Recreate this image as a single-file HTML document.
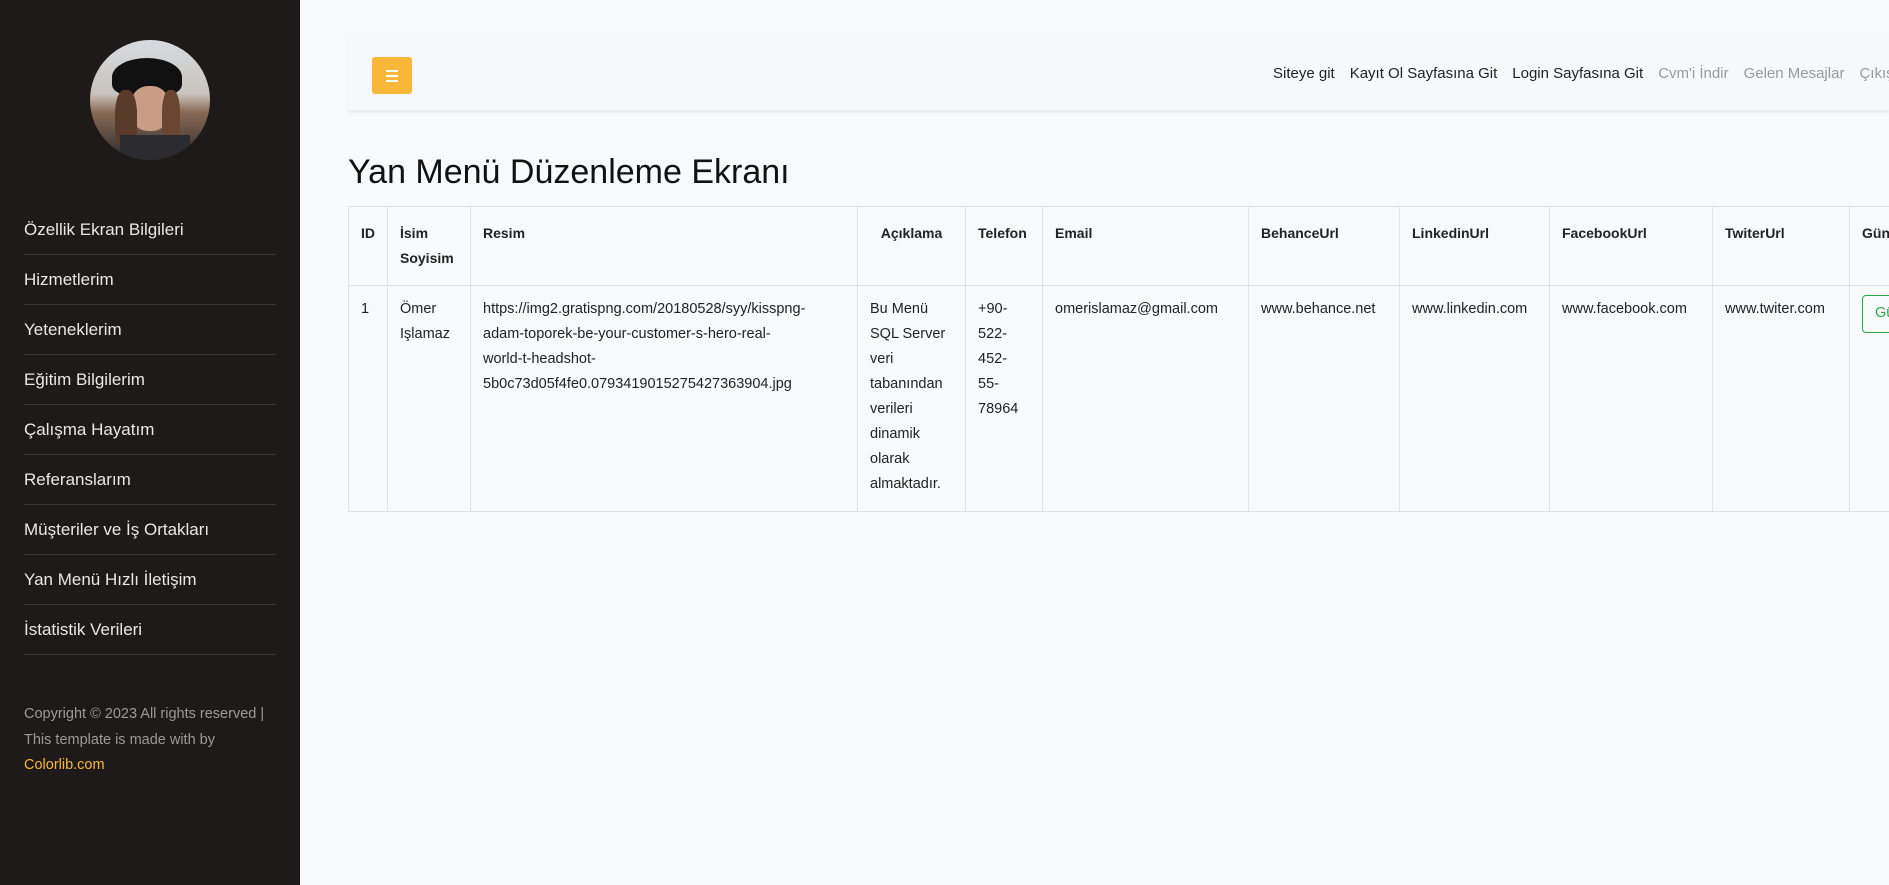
<!DOCTYPE html>
<html><head><meta charset="utf-8"><style>
*{margin:0;padding:0;box-sizing:border-box}
body{width:1889px;height:885px;overflow:hidden;background:#f8f9fa;font-family:"Liberation Sans",sans-serif;position:relative}
#sb{position:absolute;left:0;top:0;width:300px;height:885px;background:#1e1a19}
.av{position:absolute;left:90px;top:40px;width:120px;height:120px;border-radius:50%;overflow:hidden;background:linear-gradient(180deg,#d6dbe0 0%,#c9c3bd 45%,#8a6a55 60%,#2a2a2e 100%)}
.menu{position:absolute;left:24px;top:205px;width:252px}
.menu div{height:50px;line-height:50px;color:#e8e8e8;font-size:17px;border-bottom:1px solid #3a3534}
.copy{position:absolute;left:24px;top:702px;width:260px;color:#9a9a9a;font-size:14.5px;line-height:25.5px}
.copy span{color:#f8b739}
.nav{position:absolute;left:348px;top:37px;width:1541px;height:74px;background:#f7f8fa;box-shadow:0 2px 2px rgba(0,0,0,.05);border-bottom:1px solid #eceef0}
.btn{position:absolute;left:24px;top:20px;width:40px;height:37px;background:#f8b739;border-radius:3px}
.btn i{position:absolute;left:14px;width:12px;height:2px;background:#fff}
.links{position:absolute;left:925px;top:28px;font-size:15px;white-space:nowrap;color:#222}
.links span{margin-right:15px}
.links .g{color:#999}
h1{position:absolute;left:348px;top:153px;font-weight:normal;font-size:34px;color:#111}
table{position:absolute;left:348px;top:206px;width:1621px;border-collapse:collapse;table-layout:fixed;font-size:14.5px;color:#222}
td,th{border:1px solid #dee2e6;vertical-align:top;padding:14px 12px;line-height:25px;text-align:left}
th{height:76px;font-size:14px}
td{height:222px;padding-top:11px}
.gb{display:inline-block;border:1px solid #28a745;color:#28a745;border-radius:4px;padding:5px 12px;margin-top:-2px;width:80px;height:38px}
</style></head><body>
<div id="sb">
<div class="av">
<div style="position:absolute;left:22px;top:18px;width:70px;height:38px;background:#111;border-radius:50% 50% 30% 30%"></div>
<div style="position:absolute;left:40px;top:46px;width:40px;height:45px;background:#c99d85;border-radius:45%"></div>
<div style="position:absolute;left:25px;top:50px;width:22px;height:60px;background:#5a3a28;border-radius:40%"></div>
<div style="position:absolute;left:72px;top:50px;width:18px;height:55px;background:#6a4530;border-radius:40%"></div>
<div style="position:absolute;left:30px;top:95px;width:70px;height:30px;background:#2c2c30"></div>
</div>
<div class="menu">
<div>Özellik Ekran Bilgileri</div><div>Hizmetlerim</div><div>Yeteneklerim</div><div>Eğitim Bilgilerim</div><div>Çalışma Hayatım</div><div>Referanslarım</div><div>Müşteriler ve İş Ortakları</div><div>Yan Menü Hızlı İletişim</div><div>İstatistik Verileri</div>
</div>
<div class="copy">Copyright © 2023 All rights reserved | This template is made with by <span>Colorlib.com</span></div>
</div>
<div class="nav"><div class="btn"><i style="top:13px"></i><i style="top:18px"></i><i style="top:23px"></i></div>
<div class="links"><span>Siteye git</span><span>Kayıt Ol Sayfasına Git</span><span>Login Sayfasına Git</span><span class="g">Cvm'i İndir</span><span class="g">Gelen Mesajlar</span><span class="g">Çıkış</span></div></div>
<h1>Yan Menü Düzenleme Ekranı</h1>
<table>
<colgroup><col style="width:39px"><col style="width:83px"><col style="width:387px"><col style="width:108px"><col style="width:77px"><col style="width:206px"><col style="width:151px"><col style="width:150px"><col style="width:163px"><col style="width:137px"><col style="width:120px"></colgroup>
<tr><th>ID</th><th>İsim Soyisim</th><th>Resim</th><th style="text-align:center">Açıklama</th><th>Telefon</th><th>Email</th><th>BehanceUrl</th><th>LinkedinUrl</th><th>FacebookUrl</th><th>TwiterUrl</th><th>Güncelle</th></tr>
<tr><td>1</td><td>Ömer Işlamaz</td><td>https://img2.gratispng.com/20180528/syy/kisspng-<br>adam-toporek-be-your-customer-s-hero-real-<br>world-t-headshot-<br>5b0c73d05f4fe0.0793419015275427363904.jpg</td><td>Bu Menü<br>SQL Server<br>veri<br>tabanından<br>verileri<br>dinamik<br>olarak<br>almaktadır.</td><td>+90-<br>522-<br>452-<br>55-<br>78964</td><td>omerislamaz@gmail.com</td><td>www.behance.net</td><td>www.linkedin.com</td><td>www.facebook.com</td><td>www.twiter.com</td><td><span class="gb">Güncelle</span></td></tr>
</table>
</body></html>
